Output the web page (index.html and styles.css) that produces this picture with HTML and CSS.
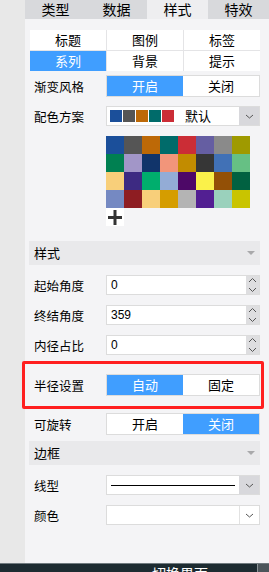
FILE: index.html
```html
<!DOCTYPE html>
<html lang="zh-CN">
<head>
  <meta charset="UTF-8">
  <title>样式设置</title>
  <link rel="stylesheet" href="styles.css">
</head>
<body>
  <div class="screen">
    <div class="main">
      <div class="strip"></div>
      <div class="panel">
        <div class="tabs">
          <div class="tab">类型</div>
          <div class="tab">数据</div>
          <div class="tab active">样式</div>
          <div class="tab">特效</div>
        </div>

        <div class="content">
          <div class="subnav">
            <div class="cell">标题</div>
            <div class="cell">图例</div>
            <div class="cell">标签</div>
            <div class="cell on">系列</div>
            <div class="cell">背景</div>
            <div class="cell">提示</div>
          </div>

          <div class="row">
            <span class="label">渐变风格</span>
            <div class="toggle"><span class="on">开启</span><span>关闭</span></div>
          </div>

          <div class="row">
            <span class="label">配色方案</span>
            <div class="select">
              <div class="select-value">
                <i class="chip" style="background:#1b4f9a"></i>
                <i class="chip" style="background:#555555"></i>
                <i class="chip" style="background:#bd6907"></i>
                <i class="chip" style="background:#006b6a"></i>
                <i class="chip" style="background:#cb2d36"></i>
                <span class="scheme-name">默认</span>
              </div>
              <div class="arrow gray">
                <svg width="9" height="5" viewBox="0 0 9 5"><path d="M1 1l3.5 3L8 1" fill="none" stroke="#555" stroke-width="1"/></svg>
              </div>
            </div>
          </div>

          <div class="palette">
            <i style="background:#1b4f9a"></i><i style="background:#555555"></i><i style="background:#bd6907"></i><i style="background:#006b6a"></i>
            <i style="background:#cb2d36"></i><i style="background:#655ea2"></i><i style="background:#8a8a8a"></i><i style="background:#9f9a00"></i>
            <i style="background:#008051"></i><i style="background:#a296c8"></i><i style="background:#11346a"></i><i style="background:#f2957a"></i>
            <i style="background:#c28c00"></i><i style="background:#363636"></i><i style="background:#4171b6"></i><i style="background:#66c084"></i>
            <i style="background:#f8cf7a"></i><i style="background:#3d2a82"></i><i style="background:#00ae6d"></i><i style="background:#93acd6"></i>
            <i style="background:#4d0867"></i><i style="background:#faf14a"></i><i style="background:#935006"></i><i style="background:#016141"></i>
            <i style="background:#7589c2"></i><i style="background:#8e1d22"></i><i style="background:#f8cf7a"></i><i style="background:#d59d00"></i>
            <i style="background:#b4b4b4"></i><i style="background:#521f92"></i><i style="background:#9ad1bc"></i><i style="background:#c9c400"></i>
          </div>
          <div class="add">
            <svg width="18" height="18" viewBox="0 0 18 18"><path d="M9 2v15M2 9.5h14" stroke="#333" stroke-width="3"/></svg>
          </div>

          <div class="section">样式<span class="caret"></span></div>

          <div class="row">
            <span class="label">起始角度</span>
            <div class="number"><span class="number-value">0</span><span class="spin"><svg width="9" height="18" viewBox="0 0 9 18"><path d="M1 6l3.5-3.5L8 6M1 12l3.5 3.5L8 12" fill="none" stroke="#555" stroke-width="1"/></svg></span></div>
          </div>
          <div class="row">
            <span class="label">终结角度</span>
            <div class="number"><span class="number-value">359</span><span class="spin"><svg width="9" height="18" viewBox="0 0 9 18"><path d="M1 6l3.5-3.5L8 6M1 12l3.5 3.5L8 12" fill="none" stroke="#555" stroke-width="1"/></svg></span></div>
          </div>
          <div class="row">
            <span class="label">内径占比</span>
            <div class="number"><span class="number-value">0</span><span class="spin"><svg width="9" height="18" viewBox="0 0 9 18"><path d="M1 6l3.5-3.5L8 6M1 12l3.5 3.5L8 12" fill="none" stroke="#555" stroke-width="1"/></svg></span></div>
          </div>

          <div class="highlight">
            <div class="row">
              <span class="label">半径设置</span>
              <div class="toggle"><span class="on">自动</span><span>固定</span></div>
            </div>
          </div>

          <div class="row">
            <span class="label">可旋转</span>
            <div class="toggle"><span>开启</span><span class="on">关闭</span></div>
          </div>

          <div class="section">边框<span class="caret"></span></div>

          <div class="row">
            <span class="label">线型</span>
            <div class="select">
              <div class="select-value"><span class="line"></span></div>
              <div class="arrow gray">
                <svg width="9" height="5" viewBox="0 0 9 5"><path d="M1 1l3.5 3L8 1" fill="none" stroke="#555" stroke-width="1"/></svg>
              </div>
            </div>
          </div>
          <div class="row">
            <span class="label">颜色</span>
            <div class="select">
              <div class="select-value"></div>
              <div class="arrow">
                <svg width="9" height="5" viewBox="0 0 9 5"><path d="M1 1l3.5 3L8 1" fill="none" stroke="#555" stroke-width="1"/></svg>
              </div>
            </div>
          </div>
        </div>
      </div>
    </div>

    <div class="taskbar">
      <span class="task-title">切换界面</span>
      <span class="task-corner"></span>
    </div>
  </div>
</body>
</html>
```

FILE: styles.css
```css
body {
  margin: 0;
  font-family: "Noto Sans CJK SC", "Liberation Sans", sans-serif;
  font-size: 13px;
  color: #000;
}
.screen {
  width: 269px;
  height: 572px;
  overflow: hidden;
  display: flex;
  flex-direction: column;
}
.main {
  height: 563px;
  display: flex;
}
.strip {
  width: 25px;
  background: #e8e8e8;
}
.panel {
  flex: 1;
  background: #f4f4f6;
}

/* tabs */
.tabs {
  display: flex;
  height: 19px;
  background: #d8d9dc;
}
.tab {
  width: 61px;
  line-height: 19px;
  text-align: center;
  font-size: 14px;
}
.tab.active {
  background: #eeeef0;
}

.content {
  padding: 11px 9px 0 4px;
}

/* sub navigation */
.subnav {
  margin-left: 1px;
  display: grid;
  grid-template-columns: repeat(3, 1fr);
  gap: 1px;
  background: #e4e4e6;
}
.cell {
  height: 20px;
  line-height: 20px;
  background: #fff;
  text-align: center;
}
.cell.on {
  background: #409eff;
  color: #fff;
}

/* form rows */
.row {
  display: flex;
  align-items: center;
  height: 30px;
}
.label {
  width: 72px;
  padding-left: 5px;
  font-size: 12.5px;
}
.toggle {
  flex: 1;
  display: flex;
  height: 20px;
  border: 1px solid #dcdcdc;
  background: #fff;
}
.toggle span {
  flex: 1;
  text-align: center;
  line-height: 20px;
}
.toggle span.on {
  background: #409eff;
  color: #fff;
}

.select {
  flex: 1;
  display: flex;
  height: 18px;
  border: 1px solid #dcdcdc;
  background: #fff;
}
.select-value {
  flex: 1;
  display: flex;
  align-items: center;
  padding-left: 3px;
  gap: 1px;
}
.chip {
  width: 12px;
  height: 12px;
}
.scheme-name {
  margin-left: 10px;
  line-height: 18px;
}
.line {
  width: 124px;
  height: 1px;
  margin-left: 1px;
  background: #000;
}
.arrow {
  width: 19px;
  display: flex;
  align-items: center;
  justify-content: center;
  border-left: 1px solid #e2e2e2;
}
.arrow.gray {
  background: #d8d8dc;
  border-left: none;
  width: 20px;
}

.palette {
  margin: 5px 0 0 77px;
  display: grid;
  grid-template-columns: repeat(8, 18px);
  grid-auto-rows: 18px;
}
.add {
  margin-left: 77px;
  width: 18px;
  height: 18px;
  background: #fff;
}
.add svg {
  display: block;
}

.section {
  margin: 15px 0 5px;
  height: 24px;
  line-height: 24px;
  padding-left: 5px;
  background: #e9e9eb;
  display: flex;
  justify-content: space-between;
  align-items: center;
}
.section + .row {
  margin-top: 0;
}
.caret {
  margin-right: 5px;
  border-left: 4.5px solid transparent;
  border-right: 4.5px solid transparent;
  border-top: 4px solid #a9a9ab;
}

.number {
  flex: 1;
  display: flex;
  height: 18px;
  border: 1px solid #dcdcdc;
  background: #fff;
}
.number-value {
  flex: 1;
  padding-left: 4px;
  font-family: "Liberation Sans", sans-serif;
  font-size: 12px;
  line-height: 18px;
}
.spin {
  width: 13px;
  background: #dedee0;
  display: flex;
  align-items: center;
  justify-content: center;
}

.highlight {
  margin: 1px -4px 0 -7px;
  border: 3px solid #ff1f1f;
  border-radius: 2px;
}
.highlight .row {
  height: 42px;
  padding-right: 1px;
}
.highlight .label {
  width: 72px;
  padding-left: 9px;
}

.highlight + .row + .section {
  margin-top: 2px;
}

/* taskbar */
.taskbar {
  flex: 1;
  position: relative;
  background: #1d2b31;
  border-top: 1px solid #707a7f;
  overflow: hidden;
}
.task-title {
  position: absolute;
  left: 152px;
  top: 1px;
  color: #fff;
  font-size: 14px;
  line-height: 16px;
}
.task-corner {
  position: absolute;
  right: 0;
  top: 0;
  width: 11px;
  height: 9px;
  background: #4b555a;
  border-left: 1px solid #8a9296;
}
```
